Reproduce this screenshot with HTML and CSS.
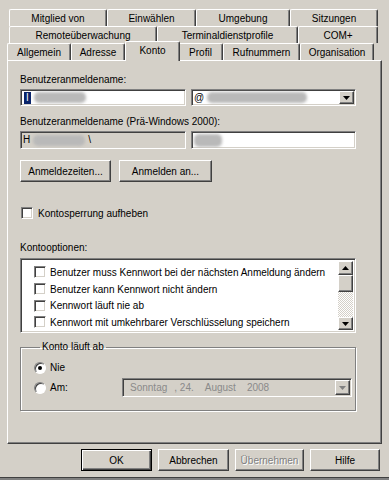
FILE: index.html
```html
<!DOCTYPE html>
<html lang="de">
<head>
<meta charset="utf-8">
<title>Eigenschaften - Konto</title>
<link rel="stylesheet" href="styles.css">
</head>
<body>
<div class="dialog">
  <div class="tabs">
    <div class="tabrow r1">
      <div class="tab t-mitglied">Mitglied von</div>
      <div class="tab t-einw">Einwählen</div>
      <div class="tab t-umg">Umgebung</div>
      <div class="tab t-sitz">Sitzungen</div>
    </div>
    <div class="tabrow r2">
      <div class="tab t-remote">Remoteüberwachung</div>
      <div class="tab t-term">Terminaldienstprofile</div>
      <div class="tab t-com">COM+</div>
    </div>
    <div class="tabrow r3">
      <div class="tab t-allg">Allgemein</div>
      <div class="tab t-adr">Adresse</div>
      <div class="tab t-konto selected">Konto</div>
      <div class="tab t-prof">Profil</div>
      <div class="tab t-ruf">Rufnummern</div>
      <div class="tab t-org">Organisation</div>
    </div>
  </div>

  <div class="panel">
    <div class="label">Benutzeranmeldename:</div>
    <div class="fieldrow">
      <div class="field sunken w-left">
        <span class="sel">I</span><span class="blob b1"></span>
      </div>
      <div class="field sunken combo">
        <span class="txt">@</span><span class="blob b2"></span>
        <span class="dropbtn raised"><svg width="7" height="4" viewBox="0 0 7 4"><polygon points="0,0 7,0 3.5,4" fill="#000"/></svg></span>
      </div>
    </div>

    <div class="label label2">Benutzeranmeldename (Prä-Windows 2000):</div>
    <div class="fieldrow fr2">
      <div class="field sunken disabled w-left">
        <span class="txt">H</span><span class="blob b3"></span><span class="txt bs">\</span>
      </div>
      <div class="field sunken combo-w">
        <span class="blob b4"></span>
      </div>
    </div>

    <div class="btnrow">
      <button class="btn raised b-zeiten">Anmeldezeiten...</button>
      <button class="btn raised b-an">Anmelden an...</button>
    </div>

    <div class="chkrow">
      <span class="chk sunken"></span><span>Kontosperrung aufheben</span>
    </div>

    <div class="label label3">Kontooptionen:</div>
    <div class="listbox sunken">
      <div class="items">
        <div class="item"><span class="chk sunken"></span><span>Benutzer muss Kennwort bei der nächsten Anmeldung ändern</span></div>
        <div class="item"><span class="chk sunken"></span><span>Benutzer kann Kennwort nicht ändern</span></div>
        <div class="item"><span class="chk sunken"></span><span>Kennwort läuft nie ab</span></div>
        <div class="item"><span class="chk sunken"></span><span>Kennwort mit umkehrbarer Verschlüsselung speichern</span></div>
      </div>
      <div class="scrollbar">
        <div class="sb-btn raised up"><svg width="7" height="4" viewBox="0 0 7 4"><polygon points="3.5,0 7,4 0,4" fill="#000"/></svg></div>
        <div class="sb-thumb raised"></div>
        <div class="sb-track"></div>
        <div class="sb-btn raised down"><svg width="7" height="4" viewBox="0 0 7 4"><polygon points="0,0 7,0 3.5,4" fill="#000"/></svg></div>
      </div>
    </div>

    <fieldset class="group">
      <legend>Konto läuft ab</legend>
      <div class="radiorow">
        <span class="radio checked"></span><span class="rlabel">Nie</span>
      </div>
      <div class="radiorow row-am">
        <span class="radio"></span><span class="rlabel">Am:</span>
        <div class="datepick sunken">
          <span class="d1">Sonntag</span><span class="d2">, 24.</span><span class="d3">August</span><span class="d4">2008</span>
          <span class="dropbtn raised dis"><svg width="7" height="4" viewBox="0 0 7 4"><polygon points="0,0 7,0 3.5,4" fill="#808080"/></svg></span>
        </div>
      </div>
    </fieldset>
  </div>

  <div class="bottom">
    <button class="btn default b-ok">OK</button>
    <button class="btn raised b-abbr">Abbrechen</button>
    <button class="btn raised b-ueb disabled-text">Übernehmen</button>
    <button class="btn raised b-hilfe">Hilfe</button>
  </div>
</div>
</body>
</html>
```

FILE: styles.css
```css
* { box-sizing: border-box; }
html, body { margin: 0; padding: 0; }
body {
  background: #d4d0c8;
  font-family: "Liberation Sans", Arial, sans-serif;
  font-size: 10px;
  color: #000;
  width: 389px;
  height: 480px;
  overflow: hidden;
}
.dialog {
  width: 389px;
  height: 480px;
  border-bottom: 2px solid #808080;
  box-shadow: inset 0 -1px #404040;
}

/* 3D borders */
.sunken {
  border: 1px solid;
  border-color: #808080 #fff #fff #808080;
  box-shadow: inset 1px 1px #404040, inset -1px -1px #d4d0c8;
}
.raised {
  border: 1px solid;
  border-color: #fff #404040 #404040 #fff;
  box-shadow: inset -1px -1px #808080;
  background: #d4d0c8;
}

/* Tabs */
.tabs { padding-top: 9px; }
.tabrow { display: flex; height: 17px; align-items: flex-end; }
.r1, .r2 { padding-left: 9px; }
.r3 { padding-left: 7px; }
.tab {
  flex: none;
  height: 17px;
  display: flex;
  align-items: center;
  justify-content: center;
  white-space: nowrap;
  border-top: 1px solid #fff;
  border-left: 1px solid #fff;
  border-right: 1px solid #404040;
  box-shadow: inset -1px 0 #808080;
  border-radius: 2px 2px 0 0;
  background: #d4d0c8;
}
.t-mitglied { width: 98px; }
.t-einw { width: 89px; }
.t-umg { width: 94px; }
.t-sitz { width: 88px; }
.t-remote { width: 148px; }
.t-term { width: 141px; }
.t-com { width: 80px; }
.t-allg { width: 64px; }
.t-adr { width: 54px; }
.t-konto { width: 55px; }
.t-prof { width: 45px; }
.t-ruf { width: 77px; }
.t-org { width: 74px; }
.tab.selected {
  position: relative;
  z-index: 2;
  height: 20px;
  margin-bottom: -1px;
  margin-right: -2px;
  padding-bottom: 3px;
}

/* Panel */
.panel {
  margin-left: 7px;
  width: 375px;
  height: 384px;
  border: 1px solid;
  border-color: #fff #404040 #404040 #fff;
  box-shadow: inset -1px -1px #808080;
  padding: 13px 0 0 12px;
  position: relative;
  z-index: 1;
}
.label { height: 12px; line-height: 12px; white-space: nowrap; }
.label2 { margin-top: 10px; }
.label3 { margin-top: 23px; }

.fieldrow { display: flex; gap: 5px; margin-top: 3px; height: 17px; }
.fr2 { height: 18px; }
.field {
  height: 100%;
  background: #fff;
  display: flex;
  align-items: center;
  padding-left: 2px;
  position: relative;
  overflow: hidden;
}
.w-left { width: 166px; }
.combo, .combo-w { width: 165px; }
.field.disabled { background: #d4d0c8; }
.sel {
  background: #0a246a;
  color: #fff;
  width: 7px;
  height: 12px;
  line-height: 12px;
  text-align: center;
  margin-left: 1px;
}
.txt { line-height: 12px; }
.bs { margin-left: 3px; }
.blob {
  display: inline-block;
  height: 11px;
  background: #b9b9b9;
  border-radius: 5px;
  filter: blur(1.6px);
}
.b1 { width: 52px; margin-left: 3px; }
.b2 { width: 100px; margin-left: 3px; }
.b3 { width: 52px; margin-left: 3px; }
.b4 { width: 28px; margin-left: 0; height: 13px; }

.combo { padding-right: 16px; }
.dropbtn {
  margin-left: auto;
  width: 15px;
  height: 13px;
  display: flex;
  align-items: center;
  justify-content: center;
  flex: none;
}
.combo .dropbtn { position: absolute; right: 1px; top: 1px; }

/* Buttons */
.btn {
  font-family: inherit;
  font-size: 10px;
  color: #000;
  height: 22px;
  padding: 0;
  margin: 0;
  display: flex;
  align-items: center;
  justify-content: center;
  white-space: nowrap;
}
.btnrow { display: flex; gap: 8px; margin-top: 11px; }
.b-zeiten { width: 91px; }
.b-an { width: 93px; }

/* Checkbox */
.chk {
  width: 12px;
  height: 12px;
  background: #fff;
  flex: none;
  display: inline-block;
}
.chkrow {
  display: flex;
  align-items: center;
  gap: 5px;
  margin-top: 25px;
  height: 12px;
  margin-left: 1px;
}

/* Listbox */
.listbox {
  margin-top: 4px;
  width: 336px;
  height: 75px;
  background: #fff;
  display: flex;
  padding: 2px 2px 2px 2px;
}
.items { flex: 1; padding: 3px 0 0 11px; }
.item {
  height: 16.7px;
  display: flex;
  align-items: center;
  gap: 4px;
  white-space: nowrap;
}
.scrollbar { width: 15px; display: flex; flex-direction: column; }
.sb-btn { height: 14px; display: flex; align-items: center; justify-content: center; flex: none; }
.sb-btn.down { height: 13px; }
.sb-thumb { height: 17px; flex: none; }
.sb-track {
  flex: 1;
  background: repeating-conic-gradient(#fff 0 25%, #d4d0c8 0 50%) 0 0 / 2px 2px;
}

/* Group box */
.group {
  margin: 8px 0 0 0;
  width: 336px;
  height: 70px;
  padding: 9px 0 0 13px;
  border: 1px solid #808080;
  box-shadow: inset 1px 1px #fff, 1px 1px #fff;
  min-width: 0;
}
.group legend {
  padding: 0 2px;
  margin-left: 6px;
  line-height: 12px;
  font-size: 10px;
}
.radiorow {
  display: grid;
  grid-template-columns: 12px 68px 230px;
  column-gap: 4px;
  align-items: center;
  height: 12px;
}
.row-am { margin-top: 4px; height: 19px; }
.radio {
  width: 12px;
  height: 12px;
  border-radius: 50%;
  background: #fff;
  border: 1px solid;
  border-color: #808080 #fff #fff #808080;
  box-shadow: inset 1px 1px #404040, 0 0 0 0 transparent;
  display: flex;
  align-items: center;
  justify-content: center;
}
.radio.checked::after {
  content: "";
  width: 4px;
  height: 4px;
  border-radius: 50%;
  background: #000;
}
.rlabel { line-height: 12px; }
.datepick {
  height: 19px;
  width: 230px;
  background: #d4d0c8;
  color: #8a8a8a;
  display: flex;
  align-items: center;
  padding-left: 7px;
  padding-right: 1px;
  white-space: nowrap;
}
.d2 { margin-left: 7px; }
.d3 { margin-left: 11px; }
.d4 { margin-left: 11px; }
.datepick .dropbtn { height: 15px; }

/* Bottom buttons */
.bottom {
  display: flex;
  gap: 6px;
  padding-left: 81px;
  margin-top: 5px;
}
.b-ok { width: 71px; }
.b-abbr { width: 71px; }
.b-ueb { width: 69px; }
.b-hilfe { width: 70px; }
.btn.default {
  border: 1px solid #000;
  background: #d4d0c8;
  box-shadow: inset 1px 1px #fff, inset -1px -1px #404040, inset -2px -2px #808080;
}
.disabled-text { color: #808080; text-shadow: 1px 1px #fff; }
```
